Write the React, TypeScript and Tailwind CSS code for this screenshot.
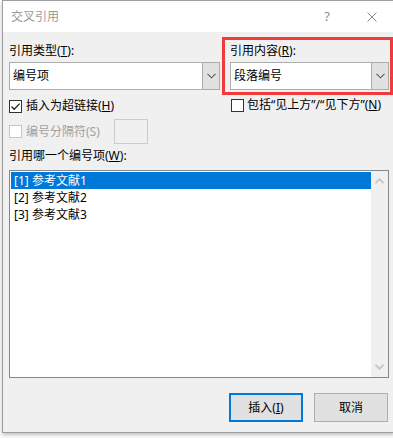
import React from "react";

const FONT = { fontFamily: '"Noto Sans", "Noto Sans CJK SC", sans-serif' };

function Chevron({ color = "#5a5a5a" }: { color?: string }) {
  return (
    <svg width="9" height="6" viewBox="0 0 9 6">
      <path d="M0.5 0.8 L4.5 4.8 L8.5 0.8" fill="none" stroke={color} strokeWidth="1.1" />
    </svg>
  );
}

function Combo({ value }: { value: string }) {
  return (
    <div className="flex h-[28px] border border-[#acacac] bg-white">
      <div className="flex flex-1 items-center pl-[3px] text-[12px] text-black">{value}</div>
      <div className="flex w-[17px] shrink-0 items-center justify-center border-l border-[#acacac] bg-[#e1e1e1]">
        <Chevron />
      </div>
    </div>
  );
}

function Check({ checked, disabled }: { checked?: boolean; disabled?: boolean }) {
  return (
    <div
      className={
        "flex h-[13px] w-[13px] shrink-0 items-center justify-center border bg-white " +
        (disabled ? "border-[#c6c6c6] bg-[#f7f7f7]" : "border-[#333333]")
      }
    >
      {checked && (
        <svg width="11" height="11" viewBox="0 0 11 11">
          <path d="M1.5 5.5 L4.2 8.2 L9.6 2.6" fill="none" stroke="#222" strokeWidth="1.3" />
        </svg>
      )}
    </div>
  );
}

export default function App() {
  return (
    <div className="relative h-[438px] w-[393px] overflow-hidden bg-white" style={FONT}>
      <div className="ml-[2px] flex h-[433px] w-[393px] flex-col border border-[#9e9e9e] bg-[#f0f0f0] shadow-[0_2px_4px_rgba(0,0,0,0.25)]">
        {/* Title bar */}
        <div className="flex h-[31px] shrink-0 items-center bg-white pl-[8px] pr-[17px]">
          <span className="text-[12px] text-[#9a9a9a]">交叉引用</span>
          <span className="ml-auto text-[13px] text-[#8a8a8a]">?</span>
          <svg className="ml-[37px]" width="10" height="10" viewBox="0 0 10 10">
            <path d="M0.5 0.5 L9.5 9.5 M9.5 0.5 L0.5 9.5" stroke="#8a8a8a" strokeWidth="1" />
          </svg>
        </div>

        {/* Content */}
        <div className="flex flex-col px-[6px] text-[12px] text-black">
          <div className="mt-[5px] flex items-start">
            {/* Left column */}
            <div className="flex w-[211px] shrink-0 flex-col pt-[6px]">
              <div className="h-[16px] leading-[16px]">
                引用类型(<span className="underline">T</span>):
              </div>
              <div className="mt-[3px]">
                <Combo value="编号项" />
              </div>
              <div className="mt-[8px] flex h-[16px] items-center gap-[4px]">
                <Check checked />
                <span className="leading-[16px]">
                  插入为超链接(<span className="underline">H</span>)
                </span>
              </div>
              <div className="mt-[5px] flex h-[25px] items-center">
                <Check disabled />
                <span className="ml-[4px] leading-[16px] text-[#a0a0a0]">编号分隔符(S)</span>
                <div className="ml-[14px] h-[25px] w-[34px] border border-[#cccccc] bg-[#f0f0f0]" />
              </div>
            </div>

            {/* Right column */}
            <div className="ml-[2px] flex w-[171px] shrink-0 flex-col">
              <div className="h-[58px] border-[3px] border-[#f03b3b] pl-[5px] pr-[1px] pt-[3px]">
                <div className="h-[16px] leading-[16px]">
                  引用内容(<span className="underline">R</span>):
                </div>
                <div className="mt-[3px]">
                  <Combo value="段落编号" />
                </div>
              </div>
              <div className="ml-[9px] mt-[2px] flex h-[16px] items-center gap-[3px]">
                <Check />
                <span className="whitespace-nowrap leading-[16px]">
                  包括“见上方”/“见下方”(<span className="underline">N</span>)
                </span>
              </div>
            </div>
          </div>

          <div className="mt-[4px] h-[16px] leading-[16px]">
            引用哪一个编号项(<span className="underline">W</span>):
          </div>

          <div className="mt-[6px] flex h-[208px] w-[380px] border border-[#828790] bg-white">
            <div className="flex flex-1 flex-col pl-[1px] pt-[1px]">
              <div className="flex h-[17px] items-center bg-[#0078d7] pl-[3px] text-white">[1] 参考文献1</div>
              <div className="flex h-[17px] items-center pl-[3px]">[2] 参考文献2</div>
              <div className="flex h-[17px] items-center pl-[3px]">[3] 参考文献3</div>
            </div>
            <div className="flex w-[17px] shrink-0 flex-col items-center justify-between bg-[#f0f0f0] py-[7px]">
              <svg width="9" height="6" viewBox="0 0 9 6">
                <path d="M0.5 5.2 L4.5 1.2 L8.5 5.2" fill="none" stroke="#c2c2c2" strokeWidth="1.6" />
              </svg>
              <svg width="9" height="6" viewBox="0 0 9 6">
                <path d="M0.5 0.8 L4.5 4.8 L8.5 0.8" fill="none" stroke="#c2c2c2" strokeWidth="1.6" />
              </svg>
            </div>
          </div>

          <div className="mt-[15px] flex justify-end gap-[11px]">
            <button className="flex h-[29px] w-[74px] items-center justify-center border-2 border-[#0078d7] bg-[#e1e1e1] text-[12px] text-black">
              插入(<span className="underline">I</span>)
            </button>
            <button className="flex h-[29px] w-[74px] items-center justify-center border border-[#adadad] bg-[#e1e1e1] text-[12px] text-black">
              取消
            </button>
          </div>
        </div>
      </div>
    </div>
  );
}
